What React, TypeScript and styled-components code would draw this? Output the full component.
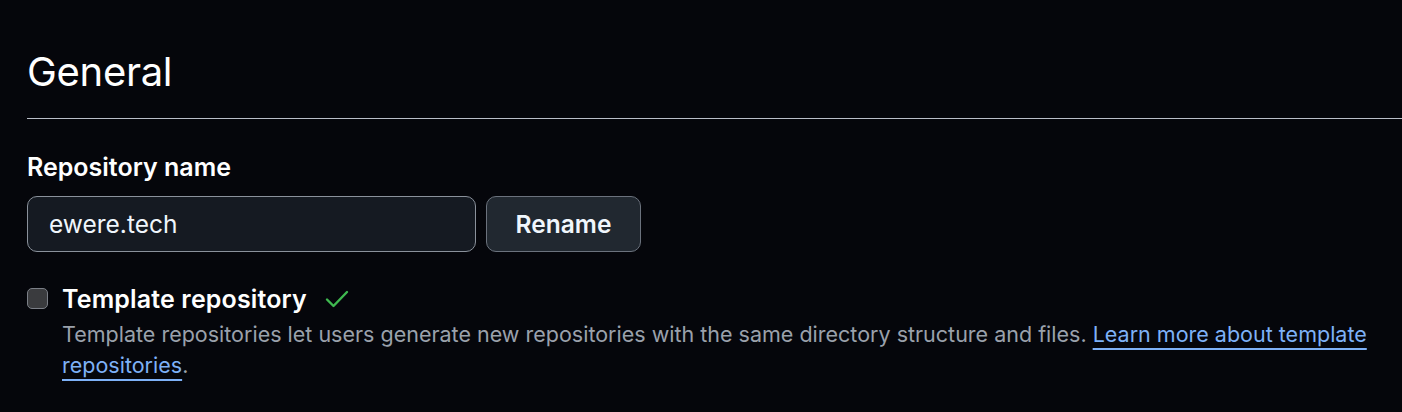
import styled, { createGlobalStyle } from "styled-components"

const Global = createGlobalStyle`
  html, body {
    margin: 0;
    background: #05060b;
  }
  body {
    font-family: Inter, "Liberation Sans", sans-serif;
    color: #f0f6fc;
  }
`

const Page = styled.main`
  padding: 42px 0 0 27px;
  min-height: 412px;
  box-sizing: border-box;
`

const Heading = styled.h2`
  margin: 0;
  font-size: 40px;
  font-weight: 400;
  line-height: 60px;
  letter-spacing: -0.3px;
  color: #ffffff;
  padding-bottom: 16px;
  border-bottom: 1px solid #b9bec8;
`

const Field = styled.div`
  margin-top: 32px;
  display: flex;
  flex-direction: column;
  gap: 13px;
`

const Label = styled.label`
  font-size: 25px;
  font-weight: 600;
  line-height: 32px;
  color: #ffffff;
`

const Row = styled.div`
  display: flex;
  gap: 10px;
`

const Input = styled.input`
  width: 449px;
  height: 56px;
  box-sizing: border-box;
  padding: 0 21px;
  background: #151a22;
  border: 1px solid #8a919b;
  border-radius: 10px;
  color: #f0f6fc;
  font: 400 24.5px Inter, "Liberation Sans", sans-serif;
  outline: none;
`

const Button = styled.button`
  width: 155px;
  height: 56px;
  box-sizing: border-box;
  background: #212830;
  border: 1px solid #6b727d;
  border-radius: 10px;
  color: #f0f6fc;
  font: 600 24.5px Inter, "Liberation Sans", sans-serif;
`

const CheckRow = styled.div`
  margin-top: 34px;
  display: flex;
  gap: 14px;
  padding-right: 20px;
`

const Box = styled.span`
  flex: none;
  margin-top: 2px;
  width: 21px;
  height: 21px;
  box-sizing: border-box;
  border: 1.5px solid #7b7f87;
  border-radius: 5px;
  background: #3a3b3e;
`

const CheckBody = styled.div`
  display: flex;
  flex-direction: column;
`

const Title = styled.div`
  display: flex;
  align-items: center;
  gap: 18px;
  font-size: 25px;
  font-weight: 600;
  letter-spacing: 0.15px;
  line-height: 26px;
  color: #ffffff;
`

const Desc = styled.p`
  margin: 7px 0 0;
  font-size: 21.5px;
  line-height: 31px;
  color: #9aa1ab;
`

const Link = styled.a`
  color: #7eb1f7;
  text-decoration: underline;
  text-decoration-thickness: 2px;
  text-underline-offset: 6px;
`

const Check = () => (
  <svg width="24" height="20" viewBox="0 0 24 20" fill="none">
    <path d="M2 10.5 L8.5 17 L22 3" stroke="#3fb950" strokeWidth="2.4" strokeLinecap="round" strokeLinejoin="round" />
  </svg>
)

export default function App() {
  return (
    <Page>
      <Global />
      <Heading>General</Heading>
      <Field>
        <Label htmlFor="repo">Repository name</Label>
        <Row>
          <Input id="repo" defaultValue="ewere.tech" />
          <Button>Rename</Button>
        </Row>
      </Field>
      <CheckRow>
        <Box />
        <CheckBody>
          <Title>
            Template repository
            <Check />
          </Title>
          <Desc>
            Template repositories let users generate new repositories with the same directory structure and files.{" "}
            <Link href="#">Learn more about template repositories</Link>.
          </Desc>
        </CheckBody>
      </CheckRow>
    </Page>
  )
}
